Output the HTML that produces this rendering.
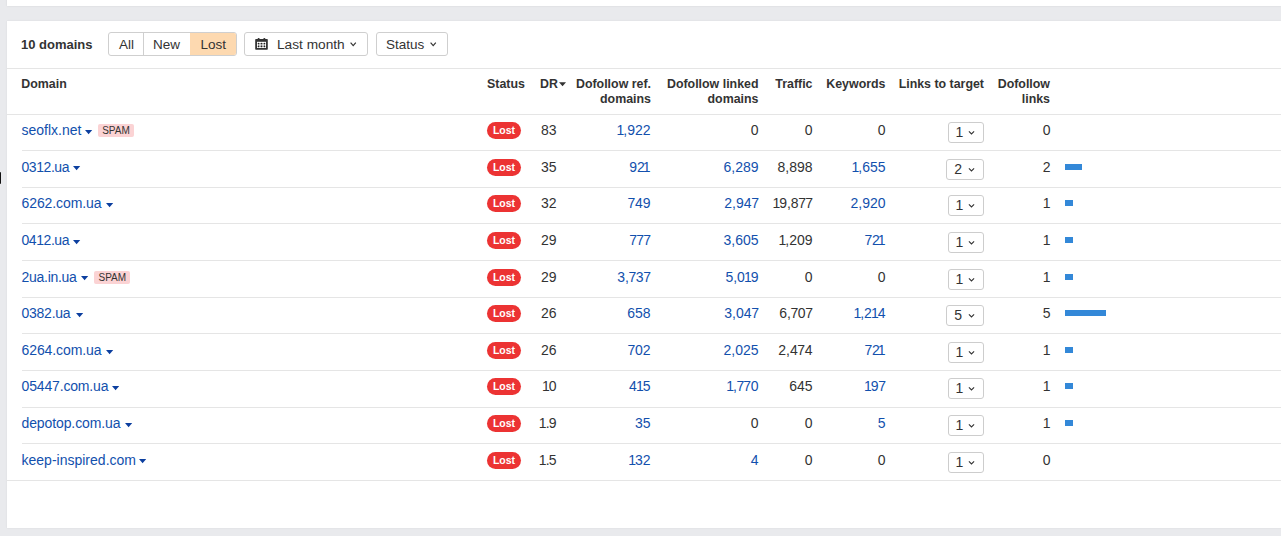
<!DOCTYPE html>
<html><head><meta charset="utf-8">
<style>
html,body{margin:0;padding:0;}
body{width:1281px;height:536px;overflow:hidden;background:#e9eaed;position:relative;font-family:"Liberation Sans",sans-serif;color:#333;}
.card0{position:absolute;left:7px;top:-10px;width:1274px;height:16px;background:#fff;box-shadow:0 0 2px rgba(0,0,0,0.09);}
.card{position:absolute;left:7px;top:21px;width:1274px;height:507px;background:#fff;box-shadow:0 0 2px rgba(0,0,0,0.07);}
.t{position:absolute;line-height:20px;white-space:nowrap;}
.title{font-weight:bold;font-size:13px;}
.grp{position:absolute;left:108px;top:32px;height:22px;width:127px;border:1px solid #cfcfcf;border-radius:3px;overflow:hidden;}
.grp div{position:absolute;top:0;height:22px;}
.grp span{position:absolute;top:1px;line-height:22px;font-size:13.5px;}
.btn{position:absolute;top:32px;height:22px;border:1px solid #cfcfcf;border-radius:3px;font-size:13.5px;line-height:22px;}
.hl{position:absolute;left:7px;width:1274px;height:1px;background:#e5e5e5;}
.rl{position:absolute;left:22px;width:1259px;height:1px;background:#e5e5e5;}
.th{position:absolute;font-weight:bold;font-size:12.4px;line-height:14.5px;white-space:nowrap;}
.dom{font-size:14px;color:#1250ad;}
.tri{position:absolute;}
.spam{position:absolute;width:36px;height:13px;background:#fbd3d4;border-radius:2px;font-size:10px;line-height:13px;text-align:center;color:#333;}
.lost{position:absolute;left:487px;width:34px;height:17px;border-radius:8.5px;background:#ec3333;color:#fff;font-weight:bold;font-size:10.5px;line-height:17px;text-align:center;}
.n{font-size:14px;}
.d1{margin:0 -1px;}
.d1e{margin:0 0 0 -2px;}
.d7{margin:0 -0.45px;}
.dp{margin:0 -0.9px;}
.b{color:#1250ad;}
.sel{position:absolute;height:18.6px;border:1px solid #cdcdcd;border-radius:3px;font-size:14px;line-height:20px;}
.bar{position:absolute;left:1065px;height:6px;background:#3388d8;}
.cursor{position:absolute;left:-1px;top:171.5px;width:2.3px;height:12.5px;background:#111;border-radius:1px;filter:blur(0.7px);}
</style></head><body>
<div class="card0"></div>
<div class="card"></div>
<div class="t title" style="left:21px;top:35px">10 domains</div>
<div class="grp">
  <span style="left:10px">All</span>
  <div style="left:34px;width:1px;background:#cfcfcf;"></div>
  <span style="left:44px">New</span>
  <div style="left:81px;width:46px;background:#fdd9b0;"></div>
  <span style="left:91.5px">Lost</span>
</div>
<div class="btn" style="left:244px;width:122px;">
  <svg style="position:absolute;left:10px;top:5px" width="14" height="13" viewBox="0 0 14 13"><rect x="0.2" y="1" width="12.6" height="10.7" rx="0.8" fill="#333"/><rect x="2.8" y="0" width="1.7" height="2.5" rx="0.6" fill="#333"/><rect x="8.5" y="0" width="1.7" height="2.5" rx="0.6" fill="#333"/><rect x="2" y="3.8" width="9" height="6.2" fill="#fff"/><rect x="3.5" y="5.5" width="6" height="2.9" fill="#ddd"/><path d="M3.5 5.5H9.5M3.5 8.4H9.5M3.5 5.5V8.4M6.5 5.5V8.4M9.5 5.5V8.4" stroke="#bbb" stroke-width="0.8" fill="none"/><g fill="#222"><circle cx="3.5" cy="5.5" r="0.85"/><circle cx="6.5" cy="5.5" r="0.85"/><circle cx="9.5" cy="5.5" r="0.85"/><circle cx="3.5" cy="8.4" r="0.85"/><circle cx="6.5" cy="8.4" r="0.85"/><circle cx="9.5" cy="8.4" r="0.85"/></g></svg>
  <span style="position:absolute;left:32px;top:1px;font-size:13.7px">Last month</span>
</div>
<svg style="position:absolute;left:349.8px;top:41.5px" width="7" height="5" viewBox="0 0 7 5"><path d="M0.6 0.7 L3.2 3.6 L5.8 0.7" fill="none" stroke="#333" stroke-width="1.2"/></svg>
<div class="btn" style="left:376px;width:70px;">
  <span style="position:absolute;left:9px;top:1px">Status</span>
</div>
<svg style="position:absolute;left:430.3px;top:41.5px" width="7" height="5" viewBox="0 0 7 5"><path d="M0.6 0.7 L3.2 3.6 L5.8 0.7" fill="none" stroke="#333" stroke-width="1.2"/></svg>
<div class="hl" style="top:68px"></div>
<div class="th" style="left:21.3px;top:77px">Domain</div>
<div class="th" style="left:487px;top:77px">Status</div>
<div class="th" style="left:540px;top:77px">DR</div>
<svg style="position:absolute;left:559px;top:82px" width="8" height="5" viewBox="0 0 8 5"><path d="M0 0.2H7L3.5 4.2Z" fill="#333"/></svg>
<div class="th" style="right:630px;top:77px;text-align:right">Dofollow ref.<br>domains</div>
<div class="th" style="right:522.5px;top:77px;text-align:right">Dofollow linked<br>domains</div>
<div class="th" style="right:468.5px;top:77px;text-align:right">Traffic</div>
<div class="th" style="right:395.5px;top:77px;text-align:right">Keywords</div>
<div class="th" style="right:297px;top:77px;text-align:right">Links to target</div>
<div class="th" style="right:231px;top:77px;text-align:right">Dofollow<br>links</div>
<div class="hl" style="top:114px"></div>
<div class="t dom" style="left:21.5px;top:120px;letter-spacing:0.000px">seoflx.net</div>
<svg class="tri" style="left:85px;top:130px" width="8" height="5" viewBox="0 0 8 5"><path d="M0 0.1H7.2L3.6 4.2Z" fill="#0c3f9f"/></svg>
<div class="spam" style="left:98px;top:124px">SPAM</div>
<div class="lost" style="top:122px">Lost</div>
<div class="t n" style="right:724.5px;top:120px;">83</div>
<div class="t n b" style="right:630.5px;top:120px;"><span class="d1">1</span>,922</div>
<div class="t n" style="right:522.5px;top:120px;">0</div>
<div class="t n" style="right:468.5px;top:120px;">0</div>
<div class="t n" style="right:395.5px;top:120px;">0</div>
<div class="sel" style="left:948.3px;width:33.5px;top:122px"><span style="position:absolute;left:6.2px;top:-1px">1</span></div>
<svg style="position:absolute;left:968.3px;top:129.5px" width="8" height="6" viewBox="0 0 8 6"><path d="M0.9 1.3 L3.5 3.9 L6.1 1.3" fill="none" stroke="#333" stroke-width="1.1"/></svg>
<div class="t n" style="right:230.5px;top:120px;">0</div>
<div class="t dom" style="left:21.5px;top:157px;letter-spacing:-0.433px">0312.ua</div>
<svg class="tri" style="left:73px;top:166px" width="8" height="5" viewBox="0 0 8 5"><path d="M0 0.1H7.2L3.6 4.2Z" fill="#0c3f9f"/></svg>
<div class="lost" style="top:159px">Lost</div>
<div class="t n" style="right:724.5px;top:157px;">35</div>
<div class="t n b" style="right:630.5px;top:157px;">92<span class="d1e">1</span></div>
<div class="t n b" style="right:522.5px;top:157px;">6,289</div>
<div class="t n" style="right:468.5px;top:157px;">8,898</div>
<div class="t n b" style="right:395.5px;top:157px;"><span class="d1">1</span>,655</div>
<div class="sel" style="left:946.3px;width:35.5px;top:159px"><span style="position:absolute;left:7px;top:-1px">2</span></div>
<svg style="position:absolute;left:968.3px;top:166.5px" width="8" height="6" viewBox="0 0 8 6"><path d="M0.9 1.3 L3.5 3.9 L6.1 1.3" fill="none" stroke="#333" stroke-width="1.1"/></svg>
<div class="t n" style="right:230.5px;top:157px;">2</div>
<div class="bar" style="top:164px;width:17px"></div>
<div class="t dom" style="left:21.5px;top:193px;letter-spacing:-0.090px">6262.com.ua</div>
<svg class="tri" style="left:106px;top:202.5px" width="8" height="5" viewBox="0 0 8 5"><path d="M0 0.1H7.2L3.6 4.2Z" fill="#0c3f9f"/></svg>
<div class="lost" style="top:195px">Lost</div>
<div class="t n" style="right:724.5px;top:193px;">32</div>
<div class="t n b" style="right:630.5px;top:193px;"><span class="d7">7</span>49</div>
<div class="t n b" style="right:522.5px;top:193px;">2,94<span class="d7">7</span></div>
<div class="t n" style="right:468.5px;top:193px;"><span class="d1">1</span>9,8<span class="d7">7</span><span class="d7">7</span></div>
<div class="t n b" style="right:395.5px;top:193px;">2,920</div>
<div class="sel" style="left:948.3px;width:33.5px;top:195px"><span style="position:absolute;left:6.2px;top:-1px">1</span></div>
<svg style="position:absolute;left:968.3px;top:202.5px" width="8" height="6" viewBox="0 0 8 6"><path d="M0.9 1.3 L3.5 3.9 L6.1 1.3" fill="none" stroke="#333" stroke-width="1.1"/></svg>
<div class="t n" style="right:230.5px;top:193px;"><span class="d1e">1</span></div>
<div class="bar" style="top:200px;width:8px"></div>
<div class="t dom" style="left:21.5px;top:230px;letter-spacing:-0.433px">0412.ua</div>
<svg class="tri" style="left:73.3px;top:240px" width="8" height="5" viewBox="0 0 8 5"><path d="M0 0.1H7.2L3.6 4.2Z" fill="#0c3f9f"/></svg>
<div class="lost" style="top:232px">Lost</div>
<div class="t n" style="right:724.5px;top:230px;">29</div>
<div class="t n b" style="right:630.5px;top:230px;"><span class="d7">7</span><span class="d7">7</span><span class="d7">7</span></div>
<div class="t n b" style="right:522.5px;top:230px;">3,605</div>
<div class="t n" style="right:468.5px;top:230px;"><span class="d1">1</span>,209</div>
<div class="t n b" style="right:395.5px;top:230px;"><span class="d7">7</span>2<span class="d1e">1</span></div>
<div class="sel" style="left:948.3px;width:33.5px;top:232px"><span style="position:absolute;left:6.2px;top:-1px">1</span></div>
<svg style="position:absolute;left:968.3px;top:239.5px" width="8" height="6" viewBox="0 0 8 6"><path d="M0.9 1.3 L3.5 3.9 L6.1 1.3" fill="none" stroke="#333" stroke-width="1.1"/></svg>
<div class="t n" style="right:230.5px;top:230px;"><span class="d1e">1</span></div>
<div class="bar" style="top:237px;width:8px"></div>
<div class="t dom" style="left:21.5px;top:267px;letter-spacing:-0.275px">2ua.in.ua</div>
<svg class="tri" style="left:81.2px;top:276px" width="8" height="5" viewBox="0 0 8 5"><path d="M0 0.1H7.2L3.6 4.2Z" fill="#0c3f9f"/></svg>
<div class="spam" style="left:94.3px;top:271px">SPAM</div>
<div class="lost" style="top:269px">Lost</div>
<div class="t n" style="right:724.5px;top:267px;">29</div>
<div class="t n b" style="right:630.5px;top:267px;">3,<span class="d7">7</span>3<span class="d7">7</span></div>
<div class="t n b" style="right:522.5px;top:267px;">5,0<span class="d1">1</span>9</div>
<div class="t n" style="right:468.5px;top:267px;">0</div>
<div class="t n" style="right:395.5px;top:267px;">0</div>
<div class="sel" style="left:948.3px;width:33.5px;top:269px"><span style="position:absolute;left:6.2px;top:-1px">1</span></div>
<svg style="position:absolute;left:968.3px;top:276.5px" width="8" height="6" viewBox="0 0 8 6"><path d="M0.9 1.3 L3.5 3.9 L6.1 1.3" fill="none" stroke="#333" stroke-width="1.1"/></svg>
<div class="t n" style="right:230.5px;top:267px;"><span class="d1e">1</span></div>
<div class="bar" style="top:274px;width:8px"></div>
<div class="t dom" style="left:21.5px;top:303px;letter-spacing:-0.250px">0382.ua</div>
<svg class="tri" style="left:76.1px;top:313px" width="8" height="5" viewBox="0 0 8 5"><path d="M0 0.1H7.2L3.6 4.2Z" fill="#0c3f9f"/></svg>
<div class="lost" style="top:305px">Lost</div>
<div class="t n" style="right:724.5px;top:303px;">26</div>
<div class="t n b" style="right:630.5px;top:303px;">658</div>
<div class="t n b" style="right:522.5px;top:303px;">3,04<span class="d7">7</span></div>
<div class="t n" style="right:468.5px;top:303px;">6,<span class="d7">7</span>0<span class="d7">7</span></div>
<div class="t n b" style="right:395.5px;top:303px;"><span class="d1">1</span>,2<span class="d1">1</span>4</div>
<div class="sel" style="left:946.3px;width:35.5px;top:305px"><span style="position:absolute;left:7px;top:-1px">5</span></div>
<svg style="position:absolute;left:968.3px;top:312.5px" width="8" height="6" viewBox="0 0 8 6"><path d="M0.9 1.3 L3.5 3.9 L6.1 1.3" fill="none" stroke="#333" stroke-width="1.1"/></svg>
<div class="t n" style="right:230.5px;top:303px;">5</div>
<div class="bar" style="top:310px;width:41px"></div>
<div class="t dom" style="left:21.5px;top:340px;letter-spacing:-0.090px">6264.com.ua</div>
<svg class="tri" style="left:106px;top:349.5px" width="8" height="5" viewBox="0 0 8 5"><path d="M0 0.1H7.2L3.6 4.2Z" fill="#0c3f9f"/></svg>
<div class="lost" style="top:342px">Lost</div>
<div class="t n" style="right:724.5px;top:340px;">26</div>
<div class="t n b" style="right:630.5px;top:340px;"><span class="d7">7</span>02</div>
<div class="t n b" style="right:522.5px;top:340px;">2,025</div>
<div class="t n" style="right:468.5px;top:340px;">2,4<span class="d7">7</span>4</div>
<div class="t n b" style="right:395.5px;top:340px;"><span class="d7">7</span>2<span class="d1e">1</span></div>
<div class="sel" style="left:948.3px;width:33.5px;top:342px"><span style="position:absolute;left:6.2px;top:-1px">1</span></div>
<svg style="position:absolute;left:968.3px;top:349.5px" width="8" height="6" viewBox="0 0 8 6"><path d="M0.9 1.3 L3.5 3.9 L6.1 1.3" fill="none" stroke="#333" stroke-width="1.1"/></svg>
<div class="t n" style="right:230.5px;top:340px;"><span class="d1e">1</span></div>
<div class="bar" style="top:347px;width:8px"></div>
<div class="t dom" style="left:21.5px;top:376px;letter-spacing:-0.155px">05447.com.ua</div>
<svg class="tri" style="left:112.2px;top:386px" width="8" height="5" viewBox="0 0 8 5"><path d="M0 0.1H7.2L3.6 4.2Z" fill="#0c3f9f"/></svg>
<div class="lost" style="top:378px">Lost</div>
<div class="t n" style="right:724.5px;top:376px;"><span class="d1">1</span>0</div>
<div class="t n b" style="right:630.5px;top:376px;">4<span class="d1">1</span>5</div>
<div class="t n b" style="right:522.5px;top:376px;"><span class="d1">1</span>,<span class="d7">7</span><span class="d7">7</span>0</div>
<div class="t n" style="right:468.5px;top:376px;">645</div>
<div class="t n b" style="right:395.5px;top:376px;"><span class="d1">1</span>9<span class="d7">7</span></div>
<div class="sel" style="left:948.3px;width:33.5px;top:378px"><span style="position:absolute;left:6.2px;top:-1px">1</span></div>
<svg style="position:absolute;left:968.3px;top:385.5px" width="8" height="6" viewBox="0 0 8 6"><path d="M0.9 1.3 L3.5 3.9 L6.1 1.3" fill="none" stroke="#333" stroke-width="1.1"/></svg>
<div class="t n" style="right:230.5px;top:376px;"><span class="d1e">1</span></div>
<div class="bar" style="top:383px;width:8px"></div>
<div class="t dom" style="left:21.5px;top:413px;letter-spacing:-0.108px">depotop.com.ua</div>
<svg class="tri" style="left:125px;top:423px" width="8" height="5" viewBox="0 0 8 5"><path d="M0 0.1H7.2L3.6 4.2Z" fill="#0c3f9f"/></svg>
<div class="lost" style="top:415px">Lost</div>
<div class="t n" style="right:724.5px;top:413px;"><span class="d1e">1</span><span class="dp">.</span>9</div>
<div class="t n b" style="right:630.5px;top:413px;">35</div>
<div class="t n" style="right:522.5px;top:413px;">0</div>
<div class="t n" style="right:468.5px;top:413px;">0</div>
<div class="t n b" style="right:395.5px;top:413px;">5</div>
<div class="sel" style="left:948.3px;width:33.5px;top:415px"><span style="position:absolute;left:6.2px;top:-1px">1</span></div>
<svg style="position:absolute;left:968.3px;top:422.5px" width="8" height="6" viewBox="0 0 8 6"><path d="M0.9 1.3 L3.5 3.9 L6.1 1.3" fill="none" stroke="#333" stroke-width="1.1"/></svg>
<div class="t n" style="right:230.5px;top:413px;"><span class="d1e">1</span></div>
<div class="bar" style="top:420px;width:8px"></div>
<div class="t dom" style="left:21.5px;top:450px;letter-spacing:0.006px">keep-inspired.com</div>
<svg class="tri" style="left:139.2px;top:459px" width="8" height="5" viewBox="0 0 8 5"><path d="M0 0.1H7.2L3.6 4.2Z" fill="#0c3f9f"/></svg>
<div class="lost" style="top:452px">Lost</div>
<div class="t n" style="right:724.5px;top:450px;"><span class="d1e">1</span><span class="dp">.</span>5</div>
<div class="t n b" style="right:630.5px;top:450px;"><span class="d1">1</span>32</div>
<div class="t n b" style="right:522.5px;top:450px;">4</div>
<div class="t n" style="right:468.5px;top:450px;">0</div>
<div class="t n" style="right:395.5px;top:450px;">0</div>
<div class="sel" style="left:948.3px;width:33.5px;top:452px"><span style="position:absolute;left:6.2px;top:-1px">1</span></div>
<svg style="position:absolute;left:968.3px;top:459.5px" width="8" height="6" viewBox="0 0 8 6"><path d="M0.9 1.3 L3.5 3.9 L6.1 1.3" fill="none" stroke="#333" stroke-width="1.1"/></svg>
<div class="t n" style="right:230.5px;top:450px;">0</div>
<div class="rl" style="top:150px"></div>
<div class="rl" style="top:187px"></div>
<div class="rl" style="top:223px"></div>
<div class="rl" style="top:260px"></div>
<div class="rl" style="top:297px"></div>
<div class="rl" style="top:333px"></div>
<div class="rl" style="top:370px"></div>
<div class="rl" style="top:407px"></div>
<div class="rl" style="top:443px"></div>
<div class="hl" style="top:480px"></div>
<div class="cursor"></div>
</body></html>
